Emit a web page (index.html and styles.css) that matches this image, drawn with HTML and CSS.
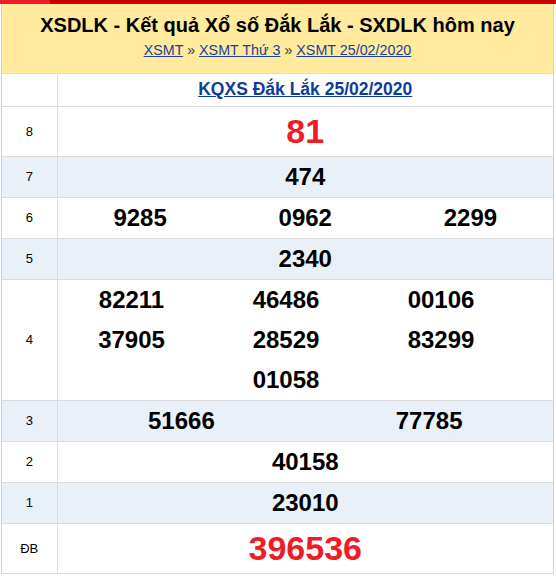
FILE: index.html
```html
<!DOCTYPE html>
<html lang="vi">
<head>
<meta charset="utf-8">
<title>XSDLK</title>
<link rel="stylesheet" href="styles.css">
</head>
<body>
<div class="page">
  <div class="topbar"><span class="tab"></span></div>
  <div class="box">
    <header class="head">
      <h1 class="title">XSDLK - Kết quả Xổ số Đắk Lắk - SXDLK hôm nay</h1>
      <div class="crumbs"><a href="#">XSMT</a> » <a href="#">XSMT Thứ 3</a> » <a href="#">XSMT 25/02/2020</a></div>
    </header>
    <table class="kq">
      <tr class="r-title"><td class="lbl"></td><td class="val"><a class="kq-link" href="#">KQXS Đắk Lắk 25/02/2020</a></td></tr>
      <tr class="r-big"><td class="lbl">8</td><td class="val"><span class="num red big">81</span></td></tr>
      <tr class="alt"><td class="lbl">7</td><td class="val"><span class="num">474</span></td></tr>
      <tr><td class="lbl">6</td><td class="val"><div class="cols3"><span class="num">9285</span><span class="num">0962</span><span class="num">2299</span></div></td></tr>
      <tr class="alt"><td class="lbl">5</td><td class="val"><span class="num">2340</span></td></tr>
      <tr><td class="lbl">4</td><td class="val"><div class="cols4"><span class="num">82211</span><span class="num">46486</span><span class="num">00106</span><span class="num">37905</span><span class="num">28529</span><span class="num">83299</span><span class="num c2">01058</span></div></td></tr>
      <tr class="alt"><td class="lbl">3</td><td class="val"><div class="cols2"><span class="num">51666</span><span class="num">77785</span></div></td></tr>
      <tr><td class="lbl">2</td><td class="val"><span class="num">40158</span></td></tr>
      <tr class="alt"><td class="lbl">1</td><td class="val"><span class="num">23010</span></td></tr>
      <tr class="r-big"><td class="lbl">ĐB</td><td class="val"><span class="num red big">396536</span></td></tr>
    </table>
  </div>
</div>
</body>
</html>
```
FILE: styles.css
```css
* { box-sizing: border-box; }
html, body { margin: 0; padding: 0; background: #fff; }
body { font-family: "Liberation Sans", Arial, sans-serif; color: #000; }
.page { width: 556px; }
.topbar { height: 4px; background: #c80000; display: flex; }
.tab { width: 50px; height: 4px; background: #ee1c25; }
.box { margin-left: 1px; width: 553px; border-left: 1px solid #cfcfcf; border-right: 1px solid #cfcfcf; }
.head { background: #ffea9e; height: 70px; border-bottom: 1px solid #dcdcdc; text-align: center; padding-top: 9px; }
.title { margin: 0; font-size: 20px; line-height: 24px; font-weight: bold; }
.crumbs { margin-top: 4px; font-size: 14.3px; line-height: 18px; color: #333; }
.crumbs a { color: #1d3f9a; }
.kq { width: 100%; border-collapse: collapse; }
.kq td { border-bottom: 1px solid #dcdcdc; padding: 0; text-align: center; vertical-align: middle; }
.lbl { width: 55px; border-right: 1px solid #dcdcdc; font-size: 13px; }
.kq-link { font-size: 17.5px; font-weight: bold; color: #0d3b9e; }
.kq tr td { height: 41px; }
.kq tr.r-big td { height: 50px; }
.kq tr.r-title td { height: 32px; }
.alt td { background: #eaf0f8; }
.num { font-size: 24px; font-weight: bold; line-height: 40px; display: inline-block; }
.red { color: #ee1c25; }
.big { font-size: 34px; line-height: 48px; }
.cols3 { display: grid; grid-template-columns: 1fr 1fr 1fr; }
.cols2 { display: grid; grid-template-columns: 1fr 1fr; }
.cols4 { display: grid; grid-template-columns: 148px 161px 149px; }
.c2 { grid-column: 2; }
```
